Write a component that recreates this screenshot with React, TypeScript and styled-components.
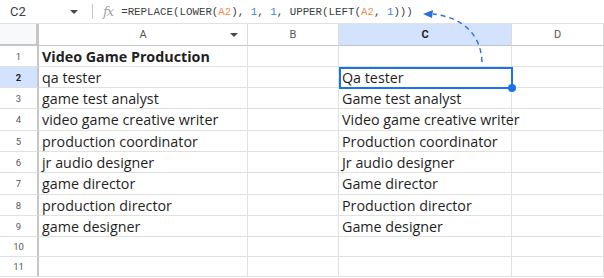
import styled, { createGlobalStyle } from "styled-components";

const GlobalStyle = createGlobalStyle`
  html, body {
    margin: 0;
    padding: 0;
    background: #ffffff;
  }
  * {
    box-sizing: border-box;
  }
`;

const Page = styled.div`
  position: relative;
  width: 604px;
  height: 278px;
  overflow: hidden;
  background: #ffffff;
  font-family: "Open Sans", "Noto Sans", sans-serif;
`;

const FormulaBar = styled.div`
  display: flex;
  align-items: center;
  height: 24px;
  border-bottom: 1px solid #e1e1e1;
  color: #3c4043;
`;

const NameBox = styled.div`
  display: flex;
  align-items: center;
  justify-content: space-between;
  width: 84px;
  padding: 0 6px 0 10px;
  font-family: Roboto, "Liberation Sans", sans-serif;
  font-size: 13px;
`;

const Caret = styled.span`
  width: 0;
  height: 0;
  border-left: 4px solid transparent;
  border-right: 4px solid transparent;
  border-top: 4px solid #444746;
`;

const Divider = styled.span`
  width: 1px;
  height: 15px;
  background: #c4c7c5;
  margin-left: 8px;
`;

const FxLabel = styled.span`
  margin: 0 8px 0 10px;
  font-family: "DejaVu Serif", "Liberation Serif", serif;
  font-style: italic;
  font-size: 13px;
  color: #a0a3a6;
  letter-spacing: -1px;
`;

const Formula = styled.span`
  font-family: "Liberation Mono", "DejaVu Sans Mono", monospace;
  font-size: 10.8px;
  color: #3c4043;
  white-space: pre;
`;

const Token = styled.span<{ $kind: "ref" | "num" }>`
  color: ${(p) => (p.$kind === "ref" ? "#ec8e4a" : "#3f7ee0")};
`;

const Sheet = styled.div`
  display: grid;
  grid-template-columns: 39px 209px 91px 173px 92px;
  grid-template-rows: 22px 21px 21px 21px 22px 21px 21px 22px 21px 21px 20px 20px;
`;

const Corner = styled.div`
  background: #f8f9fa;
  border-right: 3px solid #c4c7c5;
  border-bottom: 2px solid #c4c7c5;
`;

const ColHead = styled.div<{ $active?: boolean }>`
  position: relative;
  display: flex;
  align-items: center;
  justify-content: center;
  background: ${(p) => (p.$active ? "#d3e3fd" : "#ffffff")};
  border-right: 1px solid #dadce0;
  border-bottom: 1px solid #c4c7c5;
  font-family: Roboto, "Liberation Sans", sans-serif;
  font-size: 11px;
  font-weight: ${(p) => (p.$active ? 700 : 400)};
  color: ${(p) => (p.$active ? "#1f1f1f" : "#575757")};
`;

const HeadCaret = styled.span`
  position: absolute;
  right: 9px;
  top: 9px;
  width: 0;
  height: 0;
  border-left: 4px solid transparent;
  border-right: 4px solid transparent;
  border-top: 4px solid #444746;
`;

const RowHead = styled.div<{ $active?: boolean }>`
  display: flex;
  align-items: center;
  justify-content: center;
  background: ${(p) => (p.$active ? "#d3e3fd" : "#ffffff")};
  border-right: 2px solid #c4c7c5;
  border-bottom: 1px solid #e1e1e1;
  font-family: Roboto, "Liberation Sans", sans-serif;
  font-size: 9.5px;
  font-weight: ${(p) => (p.$active ? 700 : 400)};
  color: ${(p) => (p.$active ? "#1f1f1f" : "#575757")};
`;

const Cell = styled.div<{ $bold?: boolean }>`
  display: flex;
  align-items: center;
  padding-left: 3px;
  border-right: 1px solid #e1e1e1;
  border-bottom: 1px solid #e1e1e1;
  font-size: 14.3px;
  font-weight: ${(p) => (p.$bold ? 700 : 400)};
  color: #1f1f1f;
  white-space: nowrap;
  overflow: visible;
`;

const Selection = styled.div`
  position: absolute;
  left: 339px;
  top: 67px;
  width: 174px;
  height: 22px;
  border: 2px solid #1a73e8;
  pointer-events: none;
`;

const Handle = styled.span`
  position: absolute;
  right: -5px;
  bottom: -5px;
  width: 8px;
  height: 8px;
  border-radius: 50%;
  background: #1a73e8;
`;

const ArrowLayer = styled.svg`
  position: absolute;
  left: 0;
  top: 0;
  pointer-events: none;
`;

const colA = [
  "qa tester",
  "game test analyst",
  "video game creative writer",
  "production coordinator",
  "jr audio designer",
  "game director",
  "production director",
  "game designer",
];

const cap = (s: string) => s.charAt(0).toUpperCase() + s.slice(1);

export default function App() {
  const rows = Array.from({ length: 11 }, (_, i) => i + 1);
  return (
    <Page>
      <GlobalStyle />
      <FormulaBar>
        <NameBox>
          C2
          <Caret />
        </NameBox>
        <Divider />
        <FxLabel>fx</FxLabel>
        <Formula>
          =REPLACE(LOWER(<Token $kind="ref">A2</Token>), <Token $kind="num">1</Token>,{" "}
          <Token $kind="num">1</Token>, UPPER(LEFT(<Token $kind="ref">A2</Token>,{" "}
          <Token $kind="num">1</Token>)))
        </Formula>
      </FormulaBar>
      <Sheet>
        <Corner />
        <ColHead>
          A
          <HeadCaret />
        </ColHead>
        <ColHead>B</ColHead>
        <ColHead $active>C</ColHead>
        <ColHead>D</ColHead>
        {rows.map((r) => {
          const src = r === 1 ? "Video Game Production" : colA[r - 2] ?? "";
          return [
            <RowHead key={`h${r}`} $active={r === 2}>
              {r}
            </RowHead>,
            <Cell key={`a${r}`} $bold={r === 1}>
              {src}
            </Cell>,
            <Cell key={`b${r}`} />,
            <Cell key={`c${r}`}>{r > 1 && src ? cap(src) : ""}</Cell>,
            <Cell key={`d${r}`} />,
          ];
        })}
      </Sheet>
      <Selection>
        <Handle />
      </Selection>
      <ArrowLayer width="604" height="278" viewBox="0 0 604 278">
        <path
          d="M 482 62 C 481 36, 465 18, 433 14"
          fill="none"
          stroke="#2b6fdc"
          strokeWidth="1.4"
          strokeDasharray="5 4"
        />
        <polygon points="423,14 433,10 432,18" fill="#2b6fdc" />
      </ArrowLayer>
    </Page>
  );
}
